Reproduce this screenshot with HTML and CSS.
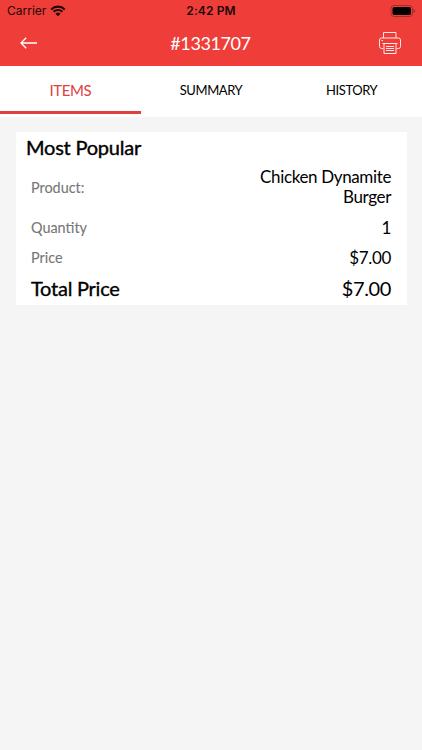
FILE: index.html
```html
<!DOCTYPE html>
<html lang="en">
<head>
<meta charset="utf-8">
<title>Order #1331707</title>
<link rel="stylesheet" href="styles.css">
</head>
<body>
<header class="top">
  <div class="status">
    <div class="carrier"><span>Carrier</span>
      <svg class="wifi" viewBox="0 0 16 12" width="16" height="12"><path d="M1.200 4.400A9.800 9.800 0 0 1 14.800 4.400M3.600 6.800A6.300 6.300 0 0 1 12.400 6.800" fill="none" stroke="#200807" stroke-width="2.100"/><path d="M5.400 8.700A4 4 0 0 1 10.600 8.700L8 11.300Z" fill="#200807"/></svg>
    </div>
    <div class="time">2:42 PM</div>
    <svg class="battery" viewBox="0 0 26 12" width="26" height="12"><rect x="1" y=".5" width="21.500" height="11" rx="3" fill="none" stroke="#a52c28"/><rect x="2.500" y="2" width="18.500" height="8" rx="1.700" fill="#000"/><path d="M23.500 4v4q1.300-.5 1.300-2T23.500 4" fill="#8f2825"/></svg>
  </div>
  <div class="nav">
    <svg class="back" viewBox="0 0 18 12" width="18" height="12"><path d="M17 6H1.200M6.200 .8 1 6l5.200 5.200" fill="none" stroke="#fff" stroke-width="1.300"/></svg>
    <h1 class="title">#1331707</h1>
    <svg class="printer" viewBox="0 0 22 22" width="22" height="22" fill="none" stroke="#ffe5e3" stroke-width="1"><path d="M4.500 16.500H2.500a2 2 0 0 1-2-2v-6.500a2 2 0 0 1 2-2h17a2 2 0 0 1 2 2v6.500a2 2 0 0 1-2 2h-2M4.500 6V.5h12.500V6M5 11.500h12v10H5zM7 14.500h8M7 16.500h8M7 18.500h8M2.500 8.500h1.500M5 11.500H3.500M17 11.500h1.500"/></svg>
  </div>
</header>
<nav class="tabs"><div class="tab active">ITEMS</div><div class="tab">SUMMARY</div><div class="tab">HISTORY</div></nav>
<main class="card">
  <h2 class="heading">Most Popular</h2>
  <div class="row product"><span class="label">Product:</span><span class="value">Chicken Dynamite Burger</span></div>
  <div class="row"><span class="label">Quantity</span><span class="value">1</span></div>
  <div class="row"><span class="label">Price</span><span class="value">$7.00</span></div>
  <div class="row total"><span class="total-label">Total Price</span><span>$7.00</span></div>
</main>
</body>
</html>
```
FILE: styles.css
```css
*{box-sizing:border-box}
body{margin:0;min-height:750px;background:#f5f5f5;font-family:Lato,sans-serif;color:#000}
.top{height:65.5px;background:#ef3e39}
.status{height:22px;display:grid;grid-template-columns:1fr auto 1fr;align-items:center;padding:0 7px;font:12px/22px Inter,sans-serif;color:#200807}
.carrier{display:flex;align-items:center;gap:4px}
.time{font-weight:600;font-size:12px;letter-spacing:.1px}
.battery{justify-self:end;margin-right:-1px}
.nav{height:44px;display:grid;grid-template-columns:1fr auto 1fr;align-items:center;padding:0 21px 2px 20px}
.title{margin:0;font-size:18px;letter-spacing:-.4px;font-weight:400;color:#fff}
.printer{justify-self:end}
.tabs{height:51px;display:grid;grid-template-columns:repeat(3,1fr);background:#fff}
.tab{display:flex;align-items:center;justify-content:center;font-size:13px;letter-spacing:-.42px;border-bottom:3px solid transparent;height:48px;padding-top:4px}
.active{font-size:15px;letter-spacing:-.4px;color:#e2403c;border-color:#e2403c}
.card{margin:15px 15.5px;height:173.5px;background:#fff;padding:3px 15.5px 0}
.heading{margin:0 0 0 -5px;font-size:20px;line-height:25px;font-weight:400;letter-spacing:-.22px;-webkit-text-stroke:.38px #000}
.row{display:flex;justify-content:space-between;align-items:center;height:30px}
.label{font-size:14.400px;color:#777;-webkit-text-stroke:.1px #777}
.value{font-size:17px;letter-spacing:-.36px;line-height:20px;text-align:right;width:150px}
.product{height:55px}
.row:nth-of-type(2),.row:nth-of-type(3){padding-bottom:4px}
.total{font-size:20px;height:26px;letter-spacing:-.35px}
.total-label{letter-spacing:-.25px;-webkit-text-stroke:.35px #000}
```
